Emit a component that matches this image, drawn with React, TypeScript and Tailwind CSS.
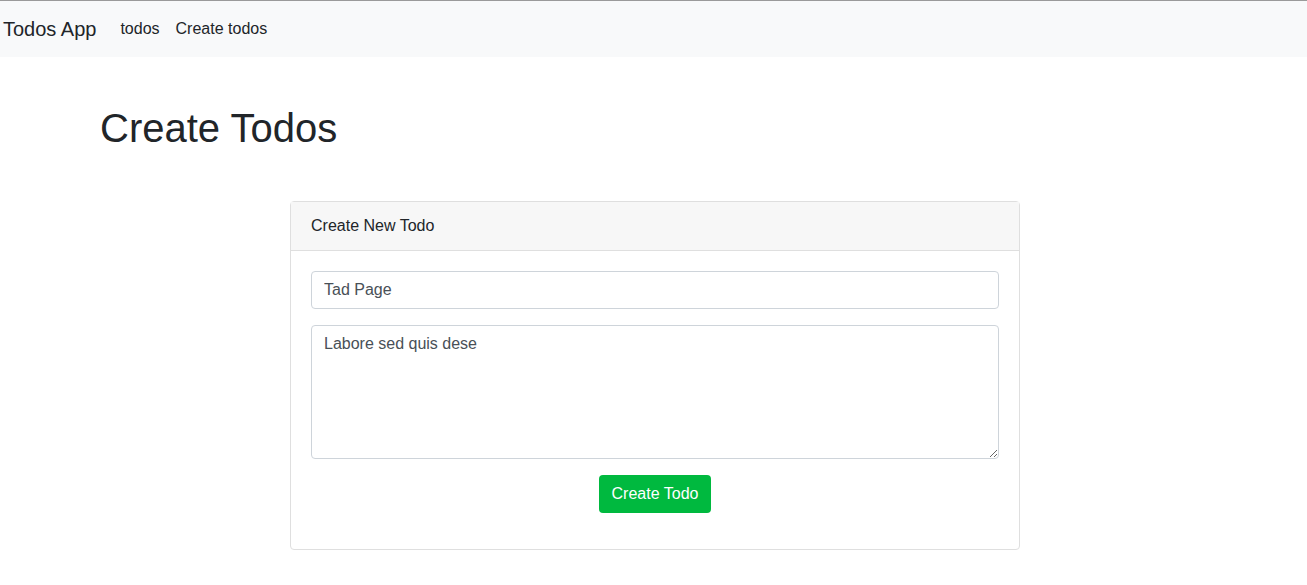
const NavBar = () => (
    <nav className="flex items-center h-[57px] bg-[#f8f9fa] border-t border-[#9a9a9a] pl-[3px]">
        <span className="text-[20px] leading-[30px] text-[#212529] mr-4">Todos App</span>
        <a className="px-2 text-[16px] text-[#212529]">todos</a>
        <a className="px-2 text-[16px] text-[#212529]">Create todos</a>
    </nav>
);

const TodoForm = () => (
    <div className="w-[730px] ml-[190px] border border-[#dfdfdf] rounded-[4px] bg-white">
        <div className="h-[49px] px-5 flex items-center bg-[#f7f7f7] border-b border-[#dfdfdf] text-[16px] text-[#212529]">
            Create New Todo
        </div>
        <div className="p-5 pb-9 flex flex-col gap-4">
            <input
                className="h-[38px] px-3 border border-[#ced4da] rounded-[4px] text-[16px] text-[#495057] outline-none"
                defaultValue="Tad Page"
            />
            <textarea
                className="h-[134px] px-3 py-[6px] border border-[#ced4da] rounded-[4px] text-[16px] leading-6 text-[#495057] outline-none"
                defaultValue="Labore sed quis dese"
            />
            <div className="flex justify-center">
                <button className="h-[38px] w-[112px] rounded-[4px] bg-[#00b93f] text-white text-[16px]">
                    Create Todo
                </button>
            </div>
        </div>
    </div>
);

export default function App() {
    return (
        <div className="min-h-[585px] bg-white font-['Liberation_Sans',Arial,sans-serif]">
            <NavBar />
            <main className="pl-[100px] w-[1240px]">
                <h1 className="mt-[47px] text-[40px] leading-[48px] text-[#212529]">Create Todos</h1>
                <div className="mt-[49px]">
                    <TodoForm />
                </div>
            </main>
        </div>
    );
}
